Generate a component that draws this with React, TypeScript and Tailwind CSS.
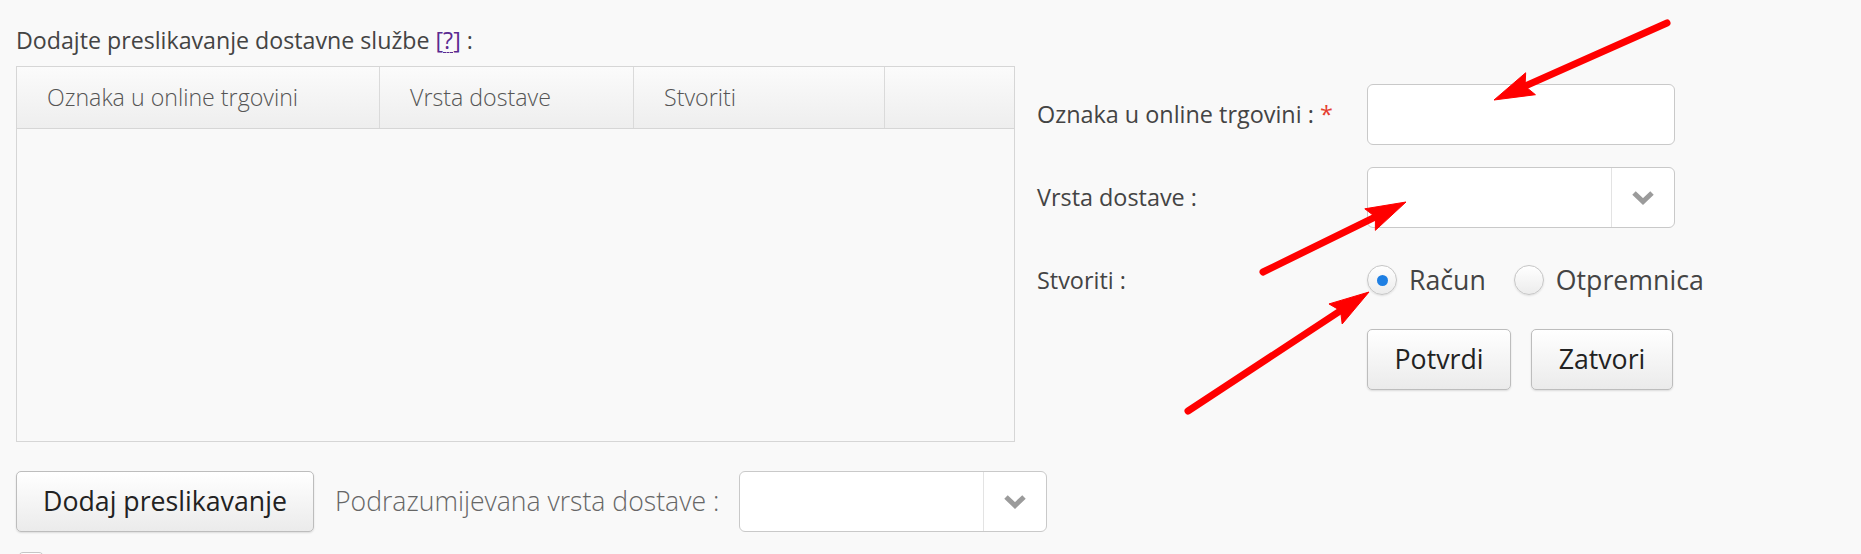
const Chevron = () => (
  <svg width="24" height="15" viewBox="0 0 24 15" className="text-[#9b9b9b]">
    <polyline points="3,3 12,11.5 21,3" fill="none" stroke="currentColor" strokeWidth="5" strokeLinejoin="miter" />
  </svg>
);

const Select = () => (
  <div className="flex h-[61px] w-[308px] shrink-0 overflow-hidden rounded-[6px] border border-[#c9c9c9] bg-white">
    <div className="flex-1" />
    <div className="flex w-[63px] items-center justify-center border-l border-[#e3e3e3]">
      <Chevron />
    </div>
  </div>
);

const Button = ({ label, width }: { label: string; width: string }) => (
  <button
    className={`flex h-[61px] ${width} shrink-0 items-center justify-center whitespace-nowrap rounded-[5px] border border-[#bdbdbd] bg-gradient-to-b from-white to-[#ebebeb] text-[26.7px] text-[#222] shadow-[0_1px_2px_rgba(0,0,0,0.12)]`}
  >
    {label}
  </button>
);

const Radio = ({ checked, label }: { checked?: boolean; label: string }) => (
  <label className="flex items-center gap-[12px] text-[26.7px] text-[#444]">
    <span className="flex h-[30px] w-[30px] items-center justify-center rounded-full border border-[#c6c6c6] bg-gradient-to-b from-white to-[#ececec] shadow-[0_1px_2px_rgba(0,0,0,0.1)]">
      {checked && <span className="h-[11px] w-[11px] rounded-full bg-[#1e7fe3]" />}
    </span>
    {label}
  </label>
);

// red annotation arrows drawn over the form
const Arrow = ({ x1, y1, x2, y2 }: { x1: number; y1: number; x2: number; y2: number }) => {
  const dx = x2 - x1;
  const dy = y2 - y1;
  const len = Math.hypot(dx, dy);
  const ux = dx / len;
  const uy = dy / len;
  const L = 40;
  const W = 12;
  const bx = x2 - ux * L;
  const by = y2 - uy * L;
  const sx = x2 - ux * (L - 6);
  const sy = y2 - uy * (L - 6);
  return (
    <g fill="#ff0000" stroke="#ff0000">
      <line x1={x1} y1={y1} x2={sx} y2={sy} strokeWidth="7" strokeLinecap="round" />
      <polygon
        points={`${x2},${y2} ${bx - uy * W},${by + ux * W} ${sx},${sy} ${bx + uy * W},${by - ux * W}`}
        strokeWidth="1"
      />
    </g>
  );
};

export default function App() {
  const cols = ["Oznaka u online trgovini", "Vrsta dostave", "Stvoriti", ""];
  return (
    <div className="relative h-[554px] w-full overflow-hidden bg-[#f9f9f9] font-['Open_Sans',sans-serif] text-[#444]">
      <div className="flex gap-[22px] pl-4 pt-6">
        <div className="w-[999px] shrink-0">
          <div className="text-[23.2px] leading-[32px]">
            Dodajte preslikavanje dostavne službe{" "}
            <span className="text-[#5b2a91]">
              [<span className="underline decoration-dashed decoration-1 underline-offset-[3px]">?</span>]
            </span>{" "}
            :
          </div>
          <div className="mt-[10px] h-[376px] border border-[#d6d6d6] bg-[#f9f9f9]">
            <div className="grid h-[62px] grid-cols-[363px_254px_251px_1fr] border-b border-[#d6d6d6] bg-gradient-to-b from-[#fbfbfb] to-[#eeeeee]">
              {cols.map((c, i) => (
                <div
                  key={i}
                  className={`flex items-center pl-[30px] text-[23.2px] font-light text-[#555] ${i < 3 ? "border-r border-[#dadada]" : ""}`}
                >
                  {c}
                </div>
              ))}
            </div>
          </div>
          <div className="mt-[29px] flex items-center whitespace-nowrap">
            <Button label="Dodaj preslikavanje" width="w-[298px]" />
            <span className="ml-[21px] shrink-0 text-[26.6px] font-light text-[#666]">Podrazumijevana vrsta dostave :</span>
            <div className="ml-[20px] shrink-0">
              <Select />
            </div>
          </div>
          <div className="mt-[20px] ml-[2px] h-[26px] w-[26px] rounded-[5px] border border-[#c6c6c6] bg-gradient-to-b from-white to-[#ececec]" />
        </div>

        <div className="mt-[60px] grid grid-cols-[330px_auto] content-start items-center gap-y-[22px] whitespace-nowrap text-[23.4px]">
          <div>
            Oznaka u online trgovini : <span className="text-[#e53e30]">*</span>
          </div>
          <div className="h-[61px] w-[308px] rounded-[6px] border border-[#c9c9c9] bg-white" />

          <div>Vrsta dostave :</div>
          <Select />

          <div>Stvoriti :</div>
          <div className="flex h-[61px] items-center">
            <Radio checked label="Račun" />
            <div className="ml-[28px]">
              <Radio label="Otpremnica" />
            </div>
          </div>

          <div />
          <div className="-mt-[4px] flex gap-[20px]">
            <Button label="Potvrdi" width="w-[144px]" />
            <Button label="Zatvori" width="w-[142px]" />
          </div>
        </div>
      </div>

      <svg className="pointer-events-none absolute inset-0" width="1861" height="554">
        <Arrow x1={1667} y1={23} x2={1494} y2={100} />
        <Arrow x1={1263} y1={272} x2={1406} y2={202} />
        <Arrow x1={1188} y1={411} x2={1369} y2={292} />
      </svg>
    </div>
  );
}
